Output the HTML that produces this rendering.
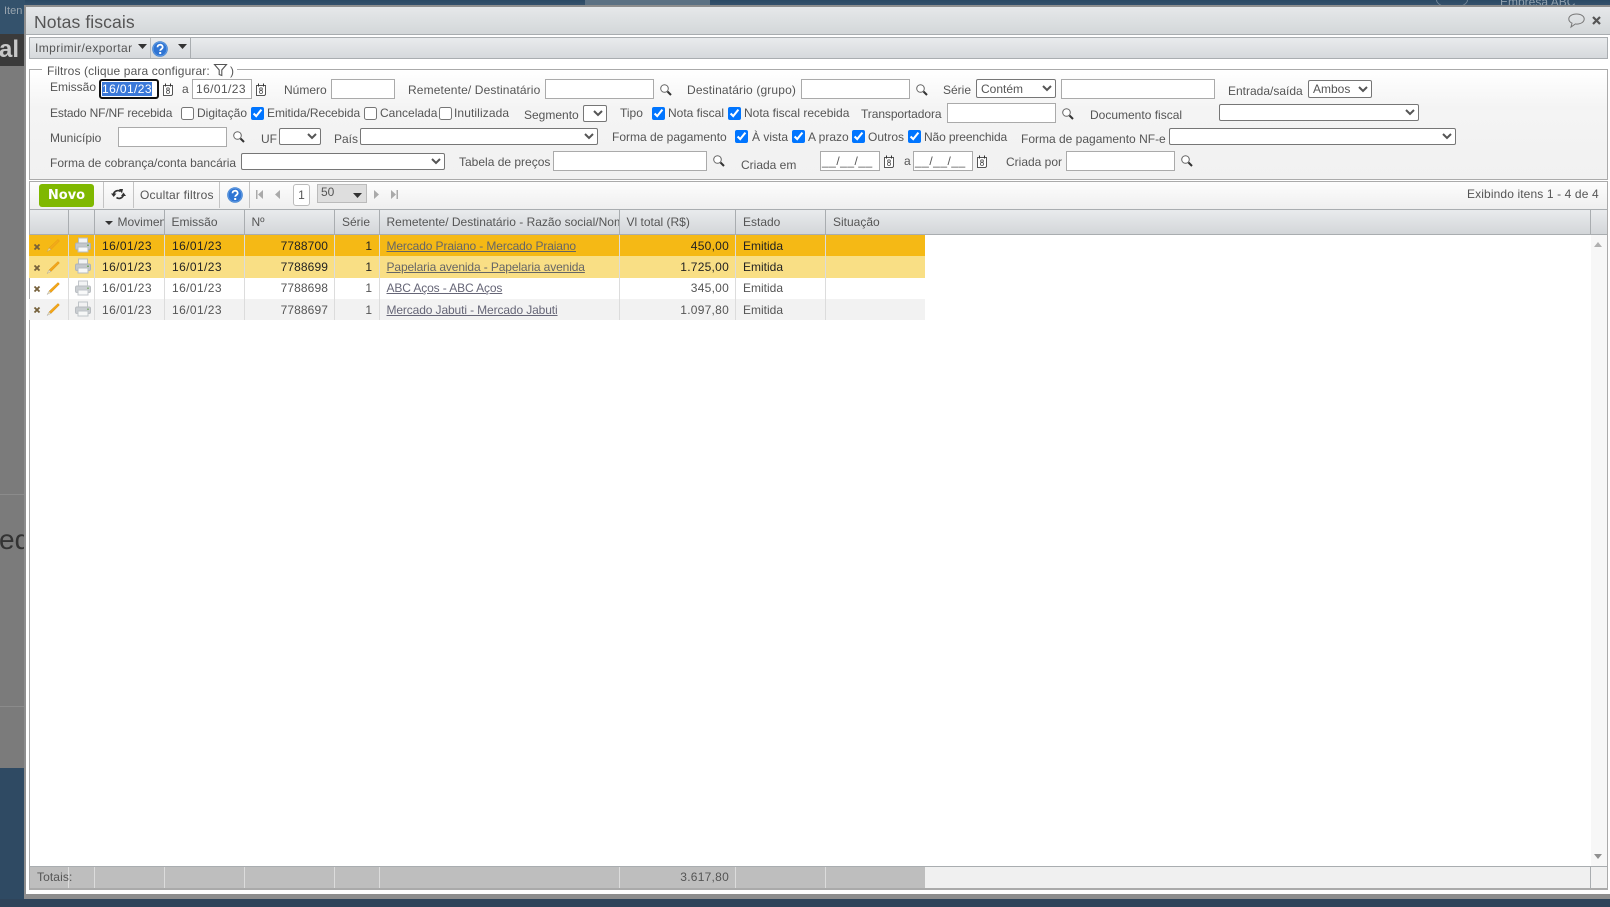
<!DOCTYPE html>
<html lang="pt"><head><meta charset="utf-8"><title>Notas fiscais</title>
<style>
html,body{margin:0;padding:0;width:1610px;height:907px;overflow:hidden;background:#7b7b7b}
body{position:relative;font:12px "Liberation Sans",sans-serif;color:#555}
.a{position:absolute}
.l{position:absolute;white-space:nowrap;line-height:14px;color:#555}
.i{position:absolute;box-sizing:border-box;height:20px;border:1px solid #aaa;background:#fff;margin:0;padding:0 3px;font:12px "Liberation Sans",sans-serif;color:#555;line-height:18px;white-space:nowrap;overflow:hidden}
select{position:absolute;box-sizing:border-box;margin:0;height:17px;background:#fff;border:1px solid #767676;border-radius:2px;font:12px "Liberation Sans",sans-serif;color:#555;padding:0}
input[type=checkbox]{position:absolute;margin:0;width:13px;height:13px}
svg{position:absolute;display:block;overflow:visible}
.sep{position:absolute;width:1px}
.r{position:absolute;left:29px;width:896px}
.c{position:absolute;white-space:nowrap;line-height:14px}
.d{letter-spacing:.4px}
.n{letter-spacing:.25px}
.lk{text-decoration:underline;color:#667;letter-spacing:-.12px}
.h{position:absolute;top:215px;line-height:14px;color:#555;white-space:nowrap}
</style></head><body>
<svg width="0" height="0" style="position:absolute"><defs>
<symbol id="cal" viewBox="0 0 12 13"><path d="M1.5 2.5h9v9l-1 1h-8z" fill="#fff" stroke="#555"/><path d="M3.5 .5v3M8.5 .5v3" stroke="#333"/><ellipse cx="6" cy="6" rx="1.4" ry="1.2" fill="none" stroke="#555" stroke-width=".8"/><ellipse cx="6" cy="9" rx="1.6" ry="1.5" fill="none" stroke="#555" stroke-width=".8"/></symbol>
<symbol id="s" viewBox="0 0 12 12"><circle cx="4.5" cy="4.5" r="3.8" fill="#fff" stroke="#666"/><path d="M7.5 7.5l3.5 3.5" stroke="#333" stroke-width="2"/></symbol>
<symbol id="x" viewBox="0 0 8 8"><path d="M1.500 1.500l5 5M6.500 1.500l-5 5" stroke="#75603a" stroke-width="1.800"/></symbol>
<symbol id="p" viewBox="0 0 14 14"><path d="M3 10L12 1.500l1.500 1.500L5 11.500z" fill="#f2a71b" stroke="#d98e10" stroke-width=".5"/><path d="M3 10l2 1.500L1 13.500z" fill="#f7e5b5" stroke="#999" stroke-width=".4"/></symbol>
<symbol id="pr" viewBox="0 0 16 16"><rect x="3.500" y="1" width="9" height="6" fill="#f2f3f4" stroke="#b7bcc1"/><rect x=".5" y="6" width="15" height="6.500" rx="1.500" fill="#c3c7cc" stroke="#aeb3b8"/><rect x="3" y="10" width="10" height="5" fill="#f7f8f8" stroke="#b7bcc1"/><rect x="12" y="7.500" width="2" height="1.500" fill="#7aa86a"/></symbol>
<symbol id="q" viewBox="0 0 16 16"><circle cx="8" cy="8" r="7.800" fill="#3d7fd0"/><circle cx="8" cy="8" r="6.800" fill="#2f74d3" stroke="#6ea6e6" stroke-width=".6"/><path d="M5.500 6.200c0-3.300 5.200-3.300 5.200-.1 0 2-2.500 2-2.500 3.700" fill="none" stroke="#fff" stroke-width="1.800"/><rect x="7.200" y="11" width="2" height="2" fill="#fff"/></symbol>
</defs></svg>

<!-- backdrop -->
<div class="a" style="left:0;top:0;width:1610px;height:8px;background:linear-gradient(#2b4964,#3a5670)"></div>
<div class="a" style="left:0;top:0;width:25px;height:34px;background:#34526c"></div>
<div class="l" style="left:4px;top:4px;color:#98a4ae;font-size:11px">Iten</div>
<div class="a" style="left:1500px;top:-5px;color:#8fa0ae;font-size:12px;line-height:14px">Empresa ABC</div>
<div class="a" style="left:1436px;top:-8px;width:30px;height:14px;border:1px solid #6f8496;border-radius:50%"></div>
<div class="a" style="left:585px;top:0;width:125px;height:7px;background:#5c7183"></div>
<div class="a" style="left:0;top:34px;width:24px;height:32px;background:#3a3a3a;overflow:hidden"><div style="position:absolute;left:-1px;top:4px;font:bold 24px/24px 'Liberation Sans',sans-serif;color:#c8c8c8">al</div></div>
<div class="a" style="left:0;top:494px;width:24px;height:1px;background:#8b8b8b"></div>
<div class="a" style="left:-1px;top:525px;font:28px/30px 'Liberation Sans',sans-serif;color:#333;width:26px;overflow:hidden">ed</div>
<div class="a" style="left:0;top:706px;width:24px;height:1px;background:#8b8b8b"></div>
<div class="a" style="left:0;top:768px;width:26px;height:139px;background:#2f4a63"></div>
<div class="a" style="left:0;top:899px;width:1610px;height:8px;background:#2f445a"></div>

<!-- window -->
<div class="a" style="left:24px;top:5px;width:1586px;height:894px;background:#8e8e8e"></div>
<div class="a" style="left:26px;top:7px;width:1584px;height:887px;background:#fff"></div>
<div class="a" style="left:26px;top:7px;width:1584px;height:27px;background:linear-gradient(#e6e8ea,#d3d7d9);border-bottom:1px solid #a9adb0"></div>
<div class="l" style="left:34px;top:12px;font-size:17.600px;line-height:20px;color:#555;letter-spacing:.08px">Notas fiscais</div>
<svg style="left:1568px;top:13px" width="17" height="15" viewBox="0 0 17 15"><path d="M8.500 1C4 1 .8 3.200.8 6c0 1.800 1.300 3.300 3.200 4.200L3 14l4.300-3c.4 0 .8.100 1.200.1 4.500 0 7.700-2.200 7.700-5.100S13 1 8.500 1z" fill="none" stroke="#777"/></svg>
<svg style="left:1592px;top:16px" width="9" height="9" viewBox="0 0 9 9"><path d="M1 1l7 7M8 1L1 8" stroke="#555" stroke-width="2.200"/></svg>

<!-- top toolbar -->
<div class="a" style="left:29px;top:37px;width:1577px;height:20px;background:linear-gradient(#e9ebed,#d6d9dc);border:1px solid #a9adb0"></div>
<div class="l" style="left:35px;top:41px;letter-spacing:.4px">Imprimir/exportar</div>
<svg style="left:138px;top:44px" width="9" height="5"><path d="M0 0h9L4.500 5z" fill="#333"/></svg>
<div class="sep" style="left:150px;top:38px;height:20px;background:#b5b9bc"></div>
<svg style="left:152px;top:41px" width="16" height="16"><use href="#q"/></svg>
<svg style="left:178px;top:44px" width="9" height="5"><path d="M0 0h9L4.500 5z" fill="#333"/></svg>
<div class="sep" style="left:190px;top:38px;height:20px;background:#a9adb0"></div>

<!-- fieldset -->
<div class="a" style="left:29px;top:69px;width:1577px;height:109px;border:1px solid #aaa;background:linear-gradient(#fff,#f4f4f4 35%,#f1f1f1)"></div>
<div class="a" style="left:42px;top:66px;width:195px;height:8px;background:#fff"></div>
<div class="l" style="left:47px;top:64px;font-size:12px;letter-spacing:.13px">Filtros (clique para configurar:</div>
<svg style="left:214px;top:64px" width="13" height="12" viewBox="0 0 13 12"><path d="M.5.500h12L7.800 6v5.500l-2.600-1V6z" fill="#fff" stroke="#555" stroke-width="1.100"/></svg>
<div class="l" style="left:230px;top:64px">)</div>

<!-- row 1 -->
<div class="l" style="left:50px;top:80px">Emissão</div>
<div class="a" style="box-sizing:border-box;left:99px;top:79px;width:60px;height:20px;border:2px solid #111;border-radius:3px;background:#fff"></div>
<div class="a d" style="left:102px;top:82px;width:50px;height:14px;line-height:14px;background:#3a78d8;color:#fff;overflow:hidden;white-space:nowrap">16/01/23</div>
<svg style="left:162px;top:83px" width="12" height="13"><use href="#cal"/></svg>
<div class="l" style="left:182px;top:82px">a</div>
<div class="i d" style="left:192px;top:79px;width:60px">16/01/23</div>
<svg style="left:255px;top:83px" width="12" height="13"><use href="#cal"/></svg>
<div class="l" style="left:284px;top:83px">Número</div>
<div class="i" style="left:331px;top:79px;width:64px"></div>
<div class="l" style="left:408px;top:83px;letter-spacing:.13px">Remetente/ Destinatário</div>
<div class="i" style="left:545px;top:79px;width:109px"></div>
<svg style="left:660px;top:84px" width="12" height="12"><use href="#s"/></svg>
<div class="l" style="left:687px;top:83px;letter-spacing:.15px">Destinatário (grupo)</div>
<div class="i" style="left:801px;top:79px;width:109px"></div>
<svg style="left:916px;top:84px" width="12" height="12"><use href="#s"/></svg>
<div class="l" style="left:943px;top:83px">Série</div>
<select style="left:976px;top:79px;width:80px;height:19px"><option>Contém</option></select>
<div class="i" style="left:1061px;top:79px;width:154px"></div>
<div class="l" style="left:1228px;top:84px">Entrada/saída</div>
<select style="left:1308px;top:80px;width:64px;height:18px"><option>Ambos</option></select>

<!-- row 2 -->
<div class="l" style="left:50px;top:106px;letter-spacing:-.15px">Estado NF/NF recebida</div>
<input type="checkbox" style="left:181px;top:107px">
<div class="l" style="left:197px;top:106px">Digitação</div>
<input type="checkbox" checked style="left:251px;top:107px">
<div class="l" style="left:267px;top:106px;letter-spacing:-.06px">Emitida/Recebida</div>
<input type="checkbox" style="left:364px;top:107px">
<div class="l" style="left:380px;top:106px">Cancelada</div>
<input type="checkbox" style="left:439px;top:107px">
<div class="l" style="left:454px;top:106px;letter-spacing:.1px">Inutilizada</div>
<div class="l" style="left:524px;top:108px">Segmento</div>
<select style="left:583px;top:105px;width:24px"></select>
<div class="l" style="left:620px;top:106px">Tipo</div>
<input type="checkbox" checked style="left:652px;top:107px">
<div class="l" style="left:668px;top:106px">Nota fiscal</div>
<input type="checkbox" checked style="left:728px;top:107px">
<div class="l" style="left:744px;top:106px">Nota fiscal recebida</div>
<div class="l" style="left:861px;top:107px;letter-spacing:-.08px">Transportadora</div>
<div class="i" style="left:947px;top:103px;width:109px"></div>
<svg style="left:1062px;top:108px" width="12" height="12"><use href="#s"/></svg>
<div class="l" style="left:1090px;top:108px">Documento fiscal</div>
<select style="left:1219px;top:104px;width:200px"></select>

<!-- row 3 -->
<div class="l" style="left:50px;top:131px">Município</div>
<div class="i" style="left:118px;top:127px;width:109px"></div>
<svg style="left:233px;top:131px" width="12" height="12"><use href="#s"/></svg>
<div class="l" style="left:261px;top:132px">UF</div>
<select style="left:279px;top:128px;width:42px"></select>
<div class="l" style="left:334px;top:132px">País</div>
<select style="left:360px;top:128px;width:238px"></select>
<div class="l" style="left:612px;top:130px">Forma de pagamento</div>
<input type="checkbox" checked style="left:735px;top:130px">
<div class="l" style="left:752px;top:130px">À vista</div>
<input type="checkbox" checked style="left:792px;top:130px">
<div class="l" style="left:808px;top:130px">A prazo</div>
<input type="checkbox" checked style="left:852px;top:130px">
<div class="l" style="left:868px;top:130px">Outros</div>
<input type="checkbox" checked style="left:908px;top:130px">
<div class="l" style="left:924px;top:130px;letter-spacing:-.12px">Não preenchida</div>
<div class="l" style="left:1021px;top:132px">Forma de pagamento NF-e</div>
<select style="left:1169px;top:128px;width:287px"></select>

<!-- row 4 -->
<div class="l" style="left:50px;top:156px">Forma de cobrança/conta bancária</div>
<select style="left:241px;top:153px;width:204px"></select>
<div class="l" style="left:459px;top:155px">Tabela de preços</div>
<div class="i" style="left:553px;top:151px;width:154px"></div>
<svg style="left:713px;top:155px" width="12" height="12"><use href="#s"/></svg>
<div class="l" style="left:741px;top:158px">Criada em</div>
<div class="i" style="left:820px;top:151px;width:60px;letter-spacing:.5px;padding:0 1px">__/__/__</div>
<svg style="left:883px;top:155px" width="12" height="13"><use href="#cal"/></svg>
<div class="l" style="left:904px;top:154px">a</div>
<div class="i" style="left:913px;top:151px;width:60px;letter-spacing:.5px;padding:0 1px">__/__/__</div>
<svg style="left:976px;top:155px" width="12" height="13"><use href="#cal"/></svg>
<div class="l" style="left:1006px;top:155px">Criada por</div>
<div class="i" style="left:1066px;top:151px;width:109px"></div>
<svg style="left:1181px;top:155px" width="12" height="12"><use href="#s"/></svg>

<!-- grid outer + pager -->
<div class="a" style="left:29px;top:181px;width:1577px;height:706px;border:1px solid #aaa;border-bottom-width:2px;box-sizing:content-box;background:#fff"></div>
<div class="a" style="left:30px;top:182px;width:1577px;height:27px;background:linear-gradient(#fdfdfd,#efefef)"></div>
<div class="a" style="left:39px;top:184px;width:55px;height:23px;background:#7fb800;border-radius:3px;color:#fff;font:bold 13px/23px 'DejaVu Sans',sans-serif;text-align:center">Novo</div>
<div class="sep" style="left:103px;top:182px;height:26px;background:#c4c4c4"></div>
<svg style="left:111px;top:188px" width="15" height="13" viewBox="0 0 15 13"><path d="M2.500 6.500C3 3 7 1.500 9.500 3.500" fill="none" stroke="#333" stroke-width="1.700"/><path d="M0 5.500h5.500L2.700 9z" fill="#333"/><path d="M8 1h4l-1 4.500z" fill="#333"/><path d="M12.500 6.500c-.5 3.500-4.500 5-7 3" fill="none" stroke="#333" stroke-width="1.700"/><path d="M15 8h-5l2.500-3.500z" fill="#333"/></svg>
<div class="sep" style="left:133px;top:182px;height:26px;background:#c4c4c4"></div>
<div class="l" style="left:140px;top:188px;letter-spacing:.2px">Ocultar filtros</div>
<div class="sep" style="left:219px;top:182px;height:26px;background:#c4c4c4"></div>
<svg style="left:227px;top:187px" width="16" height="16"><use href="#q"/></svg>
<div class="sep" style="left:249px;top:182px;height:26px;background:#c4c4c4"></div>
<svg style="left:256px;top:190px" width="7" height="9"><path d="M0 0h1.500v9H0zM7 0v9L2 4.500z" fill="#aaa"/></svg>
<svg style="left:275px;top:190px" width="5" height="9"><path d="M5 0v9L0 4.500z" fill="#aaa"/></svg>
<div class="a" style="box-sizing:border-box;left:293px;top:184px;width:17px;height:22px;border:1px solid #bbb;border-radius:3px;background:#fff;text-align:center;line-height:21px;color:#555">1</div>
<div class="a" style="box-sizing:border-box;left:317px;top:184px;width:50px;height:19px;border:1px solid #bbb;background:#dedede;padding-left:3px;line-height:14px;color:#555">50</div>
<svg style="left:353px;top:193px" width="9" height="5"><path d="M0 0h9L4.500 5z" fill="#333"/></svg>
<svg style="left:374px;top:190px" width="5" height="9"><path d="M0 0v9l5-4.500z" fill="#aaa"/></svg>
<svg style="left:391px;top:190px" width="7" height="9"><path d="M0 0v9l5-4.500zM5.500 0H7v9H5.500z" fill="#aaa"/></svg>
<div class="l" style="left:1467px;top:187px;letter-spacing:.12px">Exibindo itens 1 - 4 de 4</div>

<!-- header -->
<div class="a" style="left:30px;top:209px;width:1577px;box-sizing:border-box;height:26px;background:linear-gradient(#e9ebed,#d3d6d9);border-top:1px solid #a9adb0;border-bottom:1px solid #a9adb0"></div>
<svg style="left:105px;top:221px" width="8" height="4"><path d="M0 0h8L4 4z" fill="#333"/></svg>
<div class="h" style="left:117.500px;width:46px;overflow:hidden">Movimento</div>
<div class="h" style="left:171.500px">Emissão</div>
<div class="h" style="left:251.500px">Nº</div>
<div class="h" style="left:342px">Série</div>
<div class="h" style="left:386.500px;width:232px;overflow:hidden">Remetente/ Destinatário - Razão social/Nome</div>
<div class="h" style="left:626.500px">Vl total (R$)</div>
<div class="h" style="left:743px">Estado</div>
<div class="h" style="left:833px">Situação</div>

<!-- rows -->
<div class="r" style="top:235px;height:21px;background:#f5b915"></div>
<div class="r" style="top:256px;height:22px;background:#f9df85"></div>
<div class="r" style="top:299px;height:21px;background:#f2f2f2"></div>

<!-- column separators -->
<div class="sep" style="left:68px;top:209px;height:26px;background:#a9adb0"></div>
<div class="sep" style="left:94px;top:209px;height:26px;background:#a9adb0"></div>
<div class="sep" style="left:164px;top:209px;height:26px;background:#a9adb0"></div>
<div class="sep" style="left:244px;top:209px;height:26px;background:#a9adb0"></div>
<div class="sep" style="left:334px;top:209px;height:26px;background:#a9adb0"></div>
<div class="sep" style="left:379px;top:209px;height:26px;background:#a9adb0"></div>
<div class="sep" style="left:619px;top:209px;height:26px;background:#a9adb0"></div>
<div class="sep" style="left:735px;top:209px;height:26px;background:#a9adb0"></div>
<div class="sep" style="left:825px;top:209px;height:26px;background:#a9adb0"></div>
<div class="sep" style="left:1590px;top:209px;height:26px;background:#a9adb0"></div>
<div class="sep" style="left:68px;top:235px;height:85px;background:#dcdcdc"></div>
<div class="sep" style="left:94px;top:235px;height:85px;background:#dcdcdc"></div>
<div class="sep" style="left:164px;top:235px;height:85px;background:#dcdcdc"></div>
<div class="sep" style="left:244px;top:235px;height:85px;background:#dcdcdc"></div>
<div class="sep" style="left:334px;top:235px;height:85px;background:#dcdcdc"></div>
<div class="sep" style="left:379px;top:235px;height:85px;background:#dcdcdc"></div>
<div class="sep" style="left:619px;top:235px;height:85px;background:#dcdcdc"></div>
<div class="sep" style="left:735px;top:235px;height:85px;background:#dcdcdc"></div>
<div class="sep" style="left:825px;top:235px;height:85px;background:#dcdcdc"></div>

<!-- row contents -->
<svg style="left:33px;top:243px" width="8" height="8"><use href="#x"/></svg>
<svg style="left:46px;top:238px" width="14" height="14" opacity=".75"><use href="#p"/></svg>
<svg style="left:75px;top:237px" width="16" height="16"><use href="#pr"/></svg>
<div class="c d" style="left:102px;top:239px;color:#222">16/01/23</div>
<div class="c d" style="left:172px;top:239px;color:#222">16/01/23</div>
<div class="c" style="right:1282px;top:239px;color:#222;letter-spacing:.1px">7788700</div>
<div class="c" style="right:1238px;top:239px;color:#222">1</div>
<div class="c lk" style="left:386.500px;top:239px;color:#666">Mercado Praiano - Mercado Praiano</div>
<div class="c n" style="right:881px;top:239px;color:#222">450,00</div>
<div class="c" style="left:743px;top:239px;color:#222">Emitida</div>

<svg style="left:33px;top:264px" width="8" height="8"><use href="#x"/></svg>
<svg style="left:46px;top:260px" width="14" height="14"><use href="#p"/></svg>
<svg style="left:75px;top:258px" width="16" height="16"><use href="#pr"/></svg>
<div class="c d" style="left:102px;top:260px;color:#222">16/01/23</div>
<div class="c d" style="left:172px;top:260px;color:#222">16/01/23</div>
<div class="c" style="right:1282px;top:260px;color:#222;letter-spacing:.1px">7788699</div>
<div class="c" style="right:1238px;top:260px;color:#222">1</div>
<div class="c lk" style="left:386.500px;top:260px;color:#666">Papelaria avenida - Papelaria avenida</div>
<div class="c n" style="right:881px;top:260px;color:#222">1.725,00</div>
<div class="c" style="left:743px;top:260px;color:#222">Emitida</div>

<svg style="left:33px;top:285px" width="8" height="8"><use href="#x"/></svg>
<svg style="left:46px;top:281px" width="14" height="14"><use href="#p"/></svg>
<svg style="left:75px;top:280px" width="16" height="16" opacity=".85"><use href="#pr"/></svg>
<div class="c d" style="left:102px;top:281px">16/01/23</div>
<div class="c d" style="left:172px;top:281px">16/01/23</div>
<div class="c" style="right:1282px;top:281px;letter-spacing:.1px">7788698</div>
<div class="c" style="right:1238px;top:281px">1</div>
<div class="c lk" style="left:386.500px;top:281px">ABC Aços - ABC Aços</div>
<div class="c n" style="right:881px;top:281px">345,00</div>
<div class="c" style="left:743px;top:281px">Emitida</div>

<svg style="left:33px;top:306px" width="8" height="8"><use href="#x"/></svg>
<svg style="left:46px;top:302px" width="14" height="14"><use href="#p"/></svg>
<svg style="left:75px;top:301px" width="16" height="16" opacity=".85"><use href="#pr"/></svg>
<div class="c d" style="left:102px;top:303px">16/01/23</div>
<div class="c d" style="left:172px;top:303px">16/01/23</div>
<div class="c" style="right:1282px;top:303px;letter-spacing:.1px">7788697</div>
<div class="c" style="right:1238px;top:303px">1</div>
<div class="c lk" style="left:386.500px;top:303px">Mercado Jabuti - Mercado Jabuti</div>
<div class="c n" style="right:881px;top:303px">1.097,80</div>
<div class="c" style="left:743px;top:303px">Emitida</div>

<!-- scrollbar -->
<div class="a" style="left:1591px;top:235px;width:16px;height:631px;background:#f7f7f7"></div>
<svg style="left:1594px;top:242px" width="8" height="5"><path d="M4 0l4 5H0z" fill="#b0b0b0"/></svg>
<svg style="left:1594px;top:854px" width="8" height="5"><path d="M0 0h8L4 5z" fill="#909090"/></svg>

<!-- footer -->
<div class="a" style="left:30px;top:866px;width:1577px;height:22px;box-sizing:border-box;background:#f0f0f0;border-top:1px solid #a9adb0"></div>
<div class="a" style="left:30px;top:867px;width:895px;height:21px;background:#bebebe"></div>
<div class="sep" style="left:68px;top:867px;height:21px;background:#dcdcdc"></div>
<div class="sep" style="left:94px;top:867px;height:21px;background:#dcdcdc"></div>
<div class="sep" style="left:164px;top:867px;height:21px;background:#dcdcdc"></div>
<div class="sep" style="left:244px;top:867px;height:21px;background:#dcdcdc"></div>
<div class="sep" style="left:334px;top:867px;height:21px;background:#dcdcdc"></div>
<div class="sep" style="left:379px;top:867px;height:21px;background:#dcdcdc"></div>
<div class="sep" style="left:619px;top:867px;height:21px;background:#dcdcdc"></div>
<div class="sep" style="left:735px;top:867px;height:21px;background:#dcdcdc"></div>
<div class="sep" style="left:825px;top:867px;height:21px;background:#dcdcdc"></div>
<div class="sep" style="left:1590px;top:866px;height:22px;background:#a9adb0"></div>
<div class="c" style="left:37px;top:870px;letter-spacing:.1px">Totais:</div>
<div class="c n" style="right:881px;top:870px">3.617,80</div>
</body></html>
